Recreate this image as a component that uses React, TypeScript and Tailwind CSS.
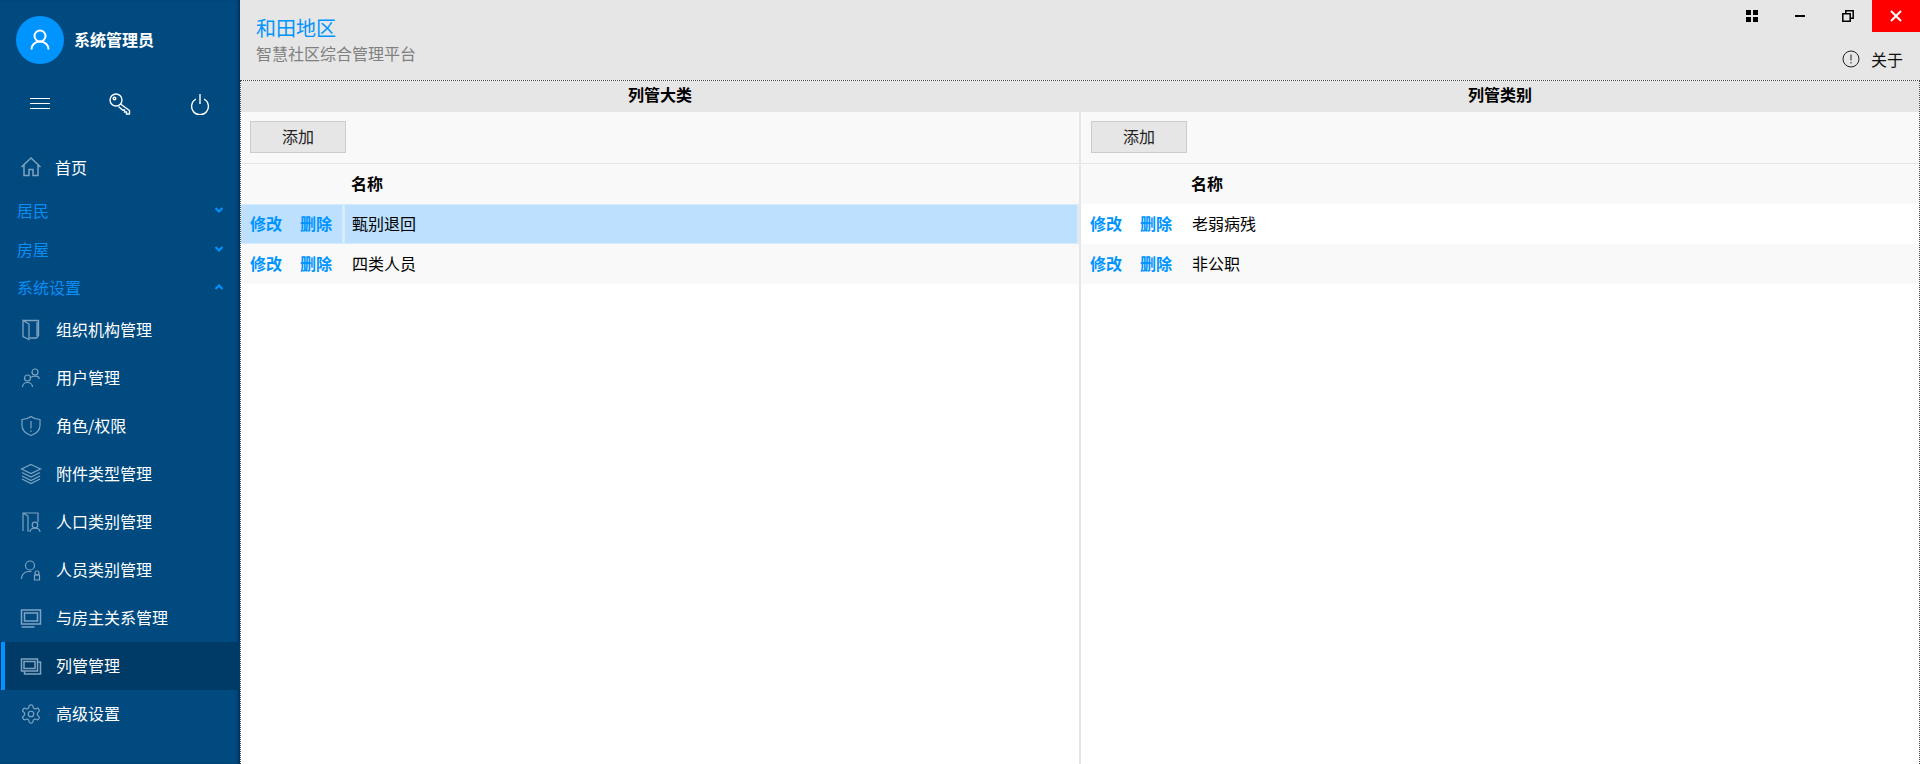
import React from "react";

const FONT = "font-['Microsoft_YaHei','Noto_Sans_CJK_SC',sans-serif]";

type IconProps = { d: React.ReactNode };
function NavIcon({ d }: IconProps) {
  return (
    <svg width="22" height="22" viewBox="0 0 22 22" fill="none" stroke="#7fa3c0" strokeWidth="1.2" className="shrink-0">
      {d}
    </svg>
  );
}

const icons: Record<string, React.ReactNode> = {
  home: <path d="M1.500 11 11 2l9.500 9M4 9v10.500h5v-6h4v6h5V9" strokeWidth="1.500" />,
  org: <path d="M3 1.500h15.500v15l-2 2.500H10M3 1.500v16l6 3V5ZM17 17V3" strokeWidth="1.300" />,
  users: (
    <>
      <circle cx="15" cy="5" r="3" />
      <path d="M11 10.500c1-1.500 6-2 8 0v1.500" />
      <circle cx="7.500" cy="11" r="3" />
      <path d="M2.500 20c0-6 10-6 10 0" />
    </>
  ),
  shield: <path d="M11 1.500c2.500 2 5.500 2.800 9 3v6c0 5-3.500 8-9 10-5.500-2-9-5-9-10v-6c3.500-.2 6.500-1 9-3ZM11 6v7.500M11 15.500v1.500" />,
  layers: <path d="M11 1.500 20.500 6 11 10.500 1.500 6ZM2 9.500l9 4.500 9-4.500M2 13l9 4.500 9-4.500M2 16l9 4.500 9-4.500" />,
  people: (
    <>
      <path d="M3 20V2h15v9M3 2l5 3v15h1" />
      <circle cx="15" cy="14" r="2.800" />
      <path d="M10 21c0-5 10-5 10 0" />
    </>
  ),
  person: (
    <>
      <circle cx="10" cy="6.500" r="4.500" />
      <path d="M1.500 20c0-4 2.500-6.500 6-7.500h4" />
      <rect x="15" y="12" width="4" height="4" rx="2" />
      <path d="M14.500 16h5v5h-5z" />
    </>
  ),
  screen: (
    <>
      <path d="M1.500 3h19v14h-19zM4.500 6h13v8h-13zM1.500 20h13" strokeWidth="1.500" />
    </>
  ),
  screens: (
    <path d="M1.500 4h16v12h-16zM4 6.500h11v7H4zM17.500 7h3v12h-16v-3" strokeWidth="1.500" />
  ),
};

function Gear() {
  return (
    <svg width="22" height="22" viewBox="0 0 24 24" fill="none" stroke="#7fa3c0" strokeWidth="1.300" className="shrink-0">
      <path d="M12.220 2h-.44a2 2 0 0 0-2 2v.18a2 2 0 0 1-1 1.730l-.43.25a2 2 0 0 1-2 0l-.15-.08a2 2 0 0 0-2.730.73l-.22.38a2 2 0 0 0 .73 2.730l.15.1a2 2 0 0 1 1 1.720v.510a2 2 0 0 1-1 1.740l-.15.09a2 2 0 0 0-.73 2.730l.22.38a2 2 0 0 0 2.730.73l.15-.08a2 2 0 0 1 2 0l.43.25a2 2 0 0 1 1 1.730V20a2 2 0 0 0 2 2h.44a2 2 0 0 0 2-2v-.18a2 2 0 0 1 1-1.730l.43-.25a2 2 0 0 1 2 0l.15.08a2 2 0 0 0 2.730-.73l.22-.39a2 2 0 0 0-.73-2.730l-.15-.08a2 2 0 0 1-1-1.740v-.5a2 2 0 0 1 1-1.740l.15-.09a2 2 0 0 0 .73-2.730l-.22-.38a2 2 0 0 0-2.730-.73l-.15.08a2 2 0 0 1-2 0l-.43-.25a2 2 0 0 1-1-1.730V4a2 2 0 0 0-2-2z" />
      <circle cx="12" cy="12" r="3" />
    </svg>
  );
}

function Chevron({ up }: { up?: boolean }) {
  return (
    <svg width="8" height="6" viewBox="0 0 8 6" fill="none" stroke="#0094ff" strokeWidth="2">
      <path d={up ? "M.5 5 4 1.500 7.500 5" : "M.5 1 4 4.500 7.500 1"} />
    </svg>
  );
}

function Section({ label, up }: { label: string; up?: boolean }) {
  return (
    <div className="flex h-[38.5px] items-center justify-between pl-[17px] pr-[17px] text-base text-[#0a8ef5]">
      <span>{label}</span>
      <Chevron up={up} />
    </div>
  );
}

function NavItem({ icon, label, active }: { icon: React.ReactNode; label: string; active?: boolean }) {
  return (
    <div className={`flex h-12 items-center text-base text-white ${active ? "bg-[#003a66]" : ""}`}>
      <div className={`h-full w-[4px] ml-[1px] shrink-0 ${active ? "bg-[#0094ff]" : ""}`} />
      <div className="ml-[15px] flex w-[36px] shrink-0">{icon}</div>
      <span className="pb-[2px]">{label}</span>
    </div>
  );
}

function Row({ name, bg, selected }: { name: string; bg: string; selected?: boolean }) {
  return (
    <div className={`flex h-10 text-base ${bg}`}>
      <div className={`flex w-[101px] shrink-0 items-center gap-[18px] pb-[2px] pl-[9px] font-bold text-[#0094ff] ${selected ? "my-[1px] bg-[#bde0ff]" : ""}`}>
        <span>修改</span>
        <span>删除</span>
      </div>
      <div className={`ml-[3px] flex flex-1 items-center pb-[2px] pl-[7px] text-black ${selected ? "my-[1px] mr-[2px] bg-[#bde0ff]" : ""}`}>
        <span>{name}</span>
      </div>
    </div>
  );
}

function Panel({ title, rows, split, pad }: { title: string; rows: React.ReactNode; split?: boolean; pad: string }) {
  return (
    <div className={`flex min-w-0 flex-1 flex-col ${split ? "border-r-2 border-[#e6e6e6]" : ""}`}>
      <div className="flex h-[30px] items-center justify-center bg-[#e6e6e6] pb-[4px] text-base font-bold text-black">{title}</div>
      <div className={`flex h-[53px] items-center border-b border-t border-[#e6e6e6] bg-[#f9f9f9] pb-[2px] ${pad}`}>
        <button className="flex h-8 w-24 items-center justify-center border border-[#cccccc] bg-[#e6e6e6] pb-[2px] text-base text-[#222222]">添加</button>
      </div>
      <div className="flex h-10 items-center bg-[#f9f9f9] pb-[2px] pl-[110px] text-base font-bold text-black">名称</div>
      {rows}
    </div>
  );
}

export default function App() {
  return (
    <div className={`${FONT} flex h-[764px] w-[1920px] overflow-hidden bg-white`}>
      <aside className="flex w-[240px] shrink-0 flex-col bg-[#004a80] shadow-[inset_-3px_0_3px_-1px_rgba(0,30,60,0.55)]">
        <div className="flex items-center gap-[10px] pl-4 pt-4">
          <div className="flex h-12 w-12 items-center justify-center rounded-full bg-[#0094ff]">
            <svg width="20" height="22" viewBox="0 0 20 22" fill="none" stroke="white" strokeWidth="2">
              <circle cx="10" cy="7" r="5.500" />
              <path d="M1.500 20.500c0-4.500 3.500-8 8.500-8s8.500 3.500 8.500 8" />
            </svg>
          </div>
          <span className="pb-[2px] text-base font-bold text-white">系统管理员</span>
        </div>
        <div className="mt-[28px] grid h-6 grid-cols-3 place-items-center">
          <svg width="20" height="12" viewBox="0 0 20 12" stroke="white" strokeWidth="1">
            <path d="M0 .5h20M0 5.500h20M0 10.500h20" />
          </svg>
          <svg width="22" height="22" viewBox="0 0 22 22" fill="none" stroke="white" strokeWidth="1.400">
            <circle cx="7" cy="7" r="6" />
            <circle cx="5.500" cy="5.500" r="1.300" />
            <path d="M11.500 11 20.500 17.500v3.500h-3v-2h-2v-2h-2l-4-3.500" />
          </svg>
          <svg width="20" height="21" viewBox="0 0 20 21" fill="none" stroke="white" strokeWidth="1.400">
            <path d="M6 5a8.400 8.400 0 1 0 8 0M10 0v10" />
          </svg>
        </div>
        <div className="mt-[27px] flex h-12 items-center text-base text-white">
          <div className="ml-[20px] w-[35px]">
            <NavIcon d={icons.home} />
          </div>
          <span>首页</span>
        </div>
        <div>
          <Section label="居民" />
          <Section label="房屋" />
          <Section label="系统设置" up />
        </div>
        <div className="-mt-[0.500px]">
          <NavItem icon={<NavIcon d={icons.org} />} label="组织机构管理" />
          <NavItem icon={<NavIcon d={icons.users} />} label="用户管理" />
          <NavItem icon={<NavIcon d={icons.shield} />} label="角色/权限" />
          <NavItem icon={<NavIcon d={icons.layers} />} label="附件类型管理" />
          <NavItem icon={<NavIcon d={icons.people} />} label="人口类别管理" />
          <NavItem icon={<NavIcon d={icons.person} />} label="人员类别管理" />
          <NavItem icon={<NavIcon d={icons.screen} />} label="与房主关系管理" />
          <NavItem icon={<NavIcon d={icons.screens} />} label="列管管理" active />
          <NavItem icon={<Gear />} label="高级设置" />
        </div>
      </aside>
      <main className="flex min-w-0 flex-1 flex-col">
        <header className="flex h-[80px] shrink-0 justify-between bg-[#e6e6e6]">
          <div className="pl-4 pt-[14px]">
            <div className="text-[20px] leading-[28px] text-[#0094ff]">和田地区</div>
            <div className="text-base leading-[22px] text-[#808080]">智慧社区综合管理平台</div>
          </div>
          <div className="flex flex-col items-end">
            <div className="flex h-8">
              <div className="flex w-12 items-center justify-center">
                <svg width="12" height="12" viewBox="0 0 12 12" fill="black">
                  <path d="M0 0h5v5H0zM7 0h5v5H7zM0 7h5v5H0zM7 7h5v5H7z" />
                </svg>
              </div>
              <div className="flex w-12 items-center justify-center">
                <div className="h-[2px] w-[10px] bg-black" />
              </div>
              <div className="flex w-12 items-center justify-center">
                <svg width="12" height="12" viewBox="0 0 12 12" fill="none" stroke="black" strokeWidth="1.500">
                  <path d="M.8 3.800h7.400v7.400H.8zM3.800 3.500V.8h7.400v7.400H8.500" />
                </svg>
              </div>
              <div className="flex w-12 items-center justify-center bg-[#ff0000]">
                <svg width="12" height="12" viewBox="0 0 12 12" stroke="white" strokeWidth="2">
                  <path d="M1 1l10 10M11 1 1 11" />
                </svg>
              </div>
            </div>
            <div className="mt-[15px] flex items-center gap-[11px] pr-[17px] text-base text-[#111111]">
              <svg width="18" height="18" viewBox="0 0 18 18" fill="none" stroke="#222222" strokeWidth="1">
                <circle cx="9" cy="9" r="8" />
                <path d="M9 4.500v6M9 12v1.500" />
              </svg>
              <span>关于</span>
            </div>
          </div>
        </header>
        <div className="flex min-h-0 flex-1 border border-b-0 border-dotted border-[#444444]">
          <Panel
            title="列管大类"
            split
            pad="pl-[9px]"
            rows={
              <>
                <Row name="甄别退回" bg="bg-[#d6ebfc]" selected />
                <Row name="四类人员" bg="bg-[#f9f9f9]" />
              </>
            }
          />
          <Panel
            title="列管类别"
            pad="pl-[10px]"
            rows={
              <>
                <Row name="老弱病残" bg="bg-white" />
                <Row name="非公职" bg="bg-[#f9f9f9]" />
              </>
            }
          />
        </div>
      </main>
    </div>
  );
}
